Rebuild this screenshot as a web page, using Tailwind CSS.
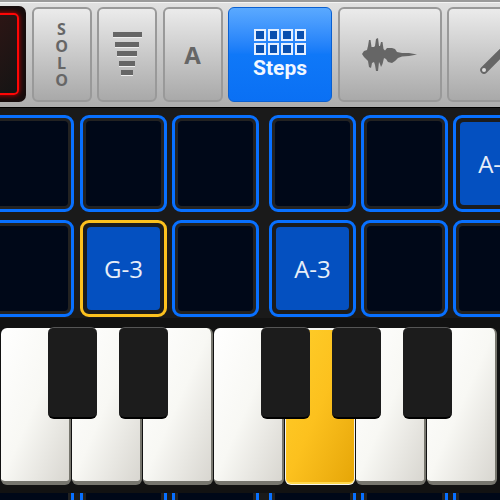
<!DOCTYPE html>
<html>
<head>
<meta charset="utf-8">
<script src="https://cdn.jsdelivr.net/npm/@tailwindcss/browser@4"></script>
</head>
<body class="w-[500px] h-[500px] overflow-hidden bg-[#1a1a1a] font-['Open_Sans',sans-serif]">
<div class="w-[500px] h-[500px] overflow-hidden flex flex-col">

  <!-- Toolbar -->
  <div class="h-[108px] shrink-0 flex items-start gap-[5.5px] pt-[5px] pl-0 -ml-[60px] w-[620px] bg-gradient-to-b from-[#e2e2e2] to-[#adadad] border-t-2 border-b border-t-[#9a9a9a] border-b-black shadow-[inset_0_1px_0_#f4f4f4]">
    <!-- Record -->
    <div class="w-[86px] h-[96px] -mt-[1px] shrink-0 rounded-[7px] bg-[#170c0c] p-[7px]">
      <div class="w-full h-full rounded-[5px] border-2 border-[#ff0606] bg-gradient-to-br from-[#3a1414] to-[#141414] shadow-[0_0_5px_#d00000]"></div>
    </div>
    <!-- Solo -->
    <div class="w-[60px] h-[95px] shrink-0 rounded-[6px] border-2 border-[#999] bg-gradient-to-b from-[#ebebeb] to-[#a9a9a9] flex flex-col items-center justify-center text-[#666] font-bold text-[16px] leading-[17px]">
      <span>S</span><span>O</span><span>L</span><span>O</span>
    </div>
    <!-- Filter -->
    <div class="w-[60px] h-[95px] shrink-0 rounded-[6px] border-2 border-[#999] bg-gradient-to-b from-[#ebebeb] to-[#a9a9a9] flex flex-col items-center justify-center gap-[3.5px] pb-[1px]">
      <div class="w-[29px] h-[6px] bg-[#666] border-b border-[#eee]"></div>
      <div class="w-[24px] h-[6px] bg-[#666] border-b border-[#eee]"></div>
      <div class="w-[20px] h-[6px] bg-[#666] border-b border-[#eee]"></div>
      <div class="w-[16px] h-[6px] bg-[#666] border-b border-[#eee]"></div>
      <div class="w-[12px] h-[6px] bg-[#666] border-b border-[#eee]"></div>
    </div>
    <!-- A -->
    <div class="w-[60px] h-[95px] shrink-0 rounded-[6px] border-2 border-[#999] bg-gradient-to-b from-[#ebebeb] to-[#a9a9a9] flex items-center justify-center text-[#666] font-bold text-[24px] leading-none">A</div>
    <!-- Steps -->
    <div class="w-[104px] h-[95px] shrink-0 rounded-[6px] border border-[#0a5fd0] bg-gradient-to-b from-[#5aa9ff] via-[#0f78f8] to-[#0a70f4] flex flex-col items-center justify-center">
      <div class="grid grid-cols-4 gap-[2px] w-[52px]">
        <div class="h-[12px] border-2 border-[#e4efff] bg-[#0a4fae]"></div>
        <div class="h-[12px] border-2 border-[#e4efff] bg-[#0a4fae]"></div>
        <div class="h-[12px] border-2 border-[#e4efff] bg-[#0a4fae]"></div>
        <div class="h-[12px] border-2 border-[#e4efff] bg-[#0a4fae]"></div>
        <div class="h-[12px] border-2 border-[#e4efff] bg-[#0a4fae]"></div>
        <div class="h-[12px] border-2 border-[#e4efff] bg-[#0a4fae]"></div>
        <div class="h-[12px] border-2 border-[#e4efff] bg-[#0a4fae]"></div>
        <div class="h-[12px] border-2 border-[#e4efff] bg-[#0a4fae]"></div>
      </div>
      <span class="font-['Roboto',sans-serif] font-bold text-[#f2f7ff] text-[21px] leading-[24px] mt-[1px]">Steps</span>
    </div>
    <!-- Waveform -->
    <div class="w-[104px] h-[95px] shrink-0 rounded-[6px] border-2 border-[#999] bg-gradient-to-b from-[#ebebeb] to-[#a9a9a9] flex items-center justify-center">
      <svg width="56" height="36" viewBox="0 0 56 36" class="fill-[#666]">
        <path d="M0 17 L2 14 L5 13 L6 9 L7 3 L8.5 3 L9.5 10 L12 10 L13 9 L14 2 L16 1 L17 9 L18 9 L19 5 L20.5 5 L21.5 12 L23 13.5 L25 11 L30 11 L33 12 L35 15 L40 16 L47 16 L55 17.5 L47 19 L40 19.5 L36 21 L33 24 L30 26 L26 25 L24 22 L22 21 L20.5 27 L19 30 L18 27 L17 25 L16 34 L14 34 L13 28 L12 25 L10 26 L9 31 L7 30 L6 24 L4 22 L2 20 Z"/>
      </svg>
    </div>
    <!-- Edit -->
    <div class="w-[104px] h-[95px] shrink-0 rounded-[6px] border-2 border-[#999] bg-gradient-to-b from-[#ebebeb] to-[#a9a9a9] relative overflow-hidden">
      <svg width="60" height="60" viewBox="0 0 60 60" class="absolute left-[26px] top-[16px]">
        <path d="M9 45 L45 9" stroke="#666" stroke-width="7.5" stroke-linecap="round" fill="none"/>
        <circle cx="9" cy="45" r="2" fill="#ddd"/>
      </svg>
    </div>
  </div>

  <!-- Step grid -->
  <div class="flex flex-col gap-[8px] pt-[7px] h-[210px] shrink-0">
    <div class="flex -ml-[13px] w-[560px] h-[97px] shrink-0">
      <div class="w-[87px] h-[97px] shrink-0 rounded-[9px] border-[3px] border-[#0870ff] bg-[#222] p-[3px]"><div class="w-full h-full rounded-[4px] bg-[#000818]"></div></div>
      <div class="w-[87px] h-[97px] shrink-0 ml-[6px] rounded-[9px] border-[3px] border-[#0870ff] bg-[#222] p-[3px]"><div class="w-full h-full rounded-[4px] bg-[#000818]"></div></div>
      <div class="w-[87px] h-[97px] shrink-0 ml-[5px] rounded-[9px] border-[3px] border-[#0870ff] bg-[#222] p-[3px]"><div class="w-full h-full rounded-[4px] bg-[#000818]"></div></div>
      <div class="w-[87px] h-[97px] shrink-0 ml-[10px] rounded-[9px] border-[3px] border-[#0870ff] bg-[#222] p-[3px]"><div class="w-full h-full rounded-[4px] bg-[#000818]"></div></div>
      <div class="w-[87px] h-[97px] shrink-0 ml-[5px] rounded-[9px] border-[3px] border-[#0870ff] bg-[#222] p-[3px]"><div class="w-full h-full rounded-[4px] bg-[#000818]"></div></div>
      <div class="w-[87px] h-[97px] shrink-0 ml-[5px] rounded-[9px] border-[3px] border-[#0870ff] bg-[#1c1c1c] p-[4px]"><div class="w-full h-full rounded-[4px] bg-[#0450c0] flex items-center justify-center text-[#e8eef8] text-[24px] leading-none">A-3</div></div>
    </div>
    <div class="flex -ml-[13px] w-[560px] h-[97px] shrink-0">
      <div class="w-[87px] h-[97px] shrink-0 rounded-[9px] border-[3px] border-[#0870ff] bg-[#222] p-[3px]"><div class="w-full h-full rounded-[4px] bg-[#000818]"></div></div>
      <div class="w-[87px] h-[97px] shrink-0 ml-[6px] rounded-[9px] border-[3px] border-[#fcc11e] bg-[#1c1c1c] p-[4px]"><div class="w-full h-full rounded-[4px] bg-[#0450c0] flex items-center justify-center text-[#e8eef8] text-[24px] leading-none">G-3</div></div>
      <div class="w-[87px] h-[97px] shrink-0 ml-[5px] rounded-[9px] border-[3px] border-[#0870ff] bg-[#222] p-[3px]"><div class="w-full h-full rounded-[4px] bg-[#000818]"></div></div>
      <div class="w-[87px] h-[97px] shrink-0 ml-[10px] rounded-[9px] border-[3px] border-[#0870ff] bg-[#1c1c1c] p-[4px]"><div class="w-full h-full rounded-[4px] bg-[#0450c0] flex items-center justify-center text-[#e8eef8] text-[24px] leading-none">A-3</div></div>
      <div class="w-[87px] h-[97px] shrink-0 ml-[5px] rounded-[9px] border-[3px] border-[#0870ff] bg-[#222] p-[3px]"><div class="w-full h-full rounded-[4px] bg-[#000818]"></div></div>
      <div class="w-[87px] h-[97px] shrink-0 ml-[5px] rounded-[9px] border-[3px] border-[#0870ff] bg-[#222] p-[3px]"><div class="w-full h-full rounded-[4px] bg-[#000818]"></div></div>
    </div>
  </div>

  <!-- Keyboard -->
  <div class="relative h-[175px] shrink-0 bg-[#121212] pt-[10px] pl-[1px] flex gap-[1px] items-start">
    <div class="w-[70px] h-[157px] shrink-0 rounded-[6px] border-r-[2px] border-b-[4px] border-[#77766e] bg-gradient-to-br from-white via-[#f8f8f4] to-[#d8d6d0]"></div>
    <div class="w-[70px] h-[157px] shrink-0 rounded-[6px] border-r-[2px] border-b-[4px] border-[#77766e] bg-gradient-to-br from-white via-[#f8f8f4] to-[#d8d6d0]"></div>
    <div class="w-[70px] h-[157px] shrink-0 rounded-[6px] border-r-[2px] border-b-[4px] border-[#77766e] bg-gradient-to-br from-white via-[#f8f8f4] to-[#d8d6d0]"></div>
    <div class="w-[70px] h-[157px] shrink-0 rounded-[6px] border-r-[2px] border-b-[4px] border-[#77766e] bg-gradient-to-br from-white via-[#f8f8f4] to-[#d8d6d0]"></div>
    <div class="w-[70px] h-[157px] shrink-0 rounded-[6px] bg-[#f4f4f0] pt-[2px] pb-[1px] px-[1px]"><div class="w-full h-full rounded-[5px] border-b-2 border-[#ffd84a] bg-gradient-to-br from-[#ffcf2a] via-[#fcc11e] to-[#e6a606]"></div></div>
    <div class="w-[70px] h-[157px] shrink-0 rounded-[6px] border-r-[2px] border-b-[4px] border-[#77766e] bg-gradient-to-br from-white via-[#f8f8f4] to-[#d8d6d0]"></div>
    <div class="w-[70px] h-[157px] shrink-0 rounded-[6px] border-r-[2px] border-b-[4px] border-[#77766e] bg-gradient-to-br from-white via-[#f8f8f4] to-[#d8d6d0]"></div>

    <div class="absolute left-[48px] top-[9px] w-[49px] h-[92px] rounded-[6px] bg-[#1c1c1c] border-t border-t-[#555] border-b-2 border-b-black"></div>
    <div class="absolute left-[119px] top-[9px] w-[49px] h-[92px] rounded-[6px] bg-[#1c1c1c] border-t border-t-[#555] border-b-2 border-b-black"></div>
    <div class="absolute left-[261px] top-[9px] w-[49px] h-[92px] rounded-[6px] bg-[#1c1c1c] border-t border-t-[#555] border-b-2 border-b-black"></div>
    <div class="absolute left-[332px] top-[9px] w-[49px] h-[92px] rounded-[6px] bg-[#1c1c1c] border-t border-t-[#555] border-b-2 border-b-black"></div>
    <div class="absolute left-[403px] top-[9px] w-[49px] h-[92px] rounded-[6px] bg-[#1c1c1c] border-t border-t-[#555] border-b-2 border-b-black"></div>
  </div>

  <!-- Next row, cut off by the window -->
  <div class="flex -ml-[13px] w-[560px] h-[7px] shrink-0 overflow-hidden bg-[#1a1a1a]">
    <div class="w-[87px] h-[40px] shrink-0 border-x-[3px] border-[#0870ff] bg-[#222] px-[3px]"><div class="w-full h-full bg-[#000818]"></div></div>
    <div class="w-[87px] h-[40px] shrink-0 ml-[6px] border-x-[3px] border-[#0870ff] bg-[#222] px-[3px]"><div class="w-full h-full bg-[#000818]"></div></div>
    <div class="w-[87px] h-[40px] shrink-0 ml-[5px] border-x-[3px] border-[#0870ff] bg-[#222] px-[3px]"><div class="w-full h-full bg-[#000818]"></div></div>
    <div class="w-[87px] h-[40px] shrink-0 ml-[10px] border-x-[3px] border-[#0870ff] bg-[#222] px-[3px]"><div class="w-full h-full bg-[#000818]"></div></div>
    <div class="w-[87px] h-[40px] shrink-0 ml-[5px] border-x-[3px] border-[#0870ff] bg-[#222] px-[3px]"><div class="w-full h-full bg-[#000818]"></div></div>
    <div class="w-[87px] h-[40px] shrink-0 ml-[5px] border-x-[3px] border-[#0870ff] bg-[#222] px-[3px]"><div class="w-full h-full bg-[#000818]"></div></div>
  </div>
</div>
</body>
</html>
